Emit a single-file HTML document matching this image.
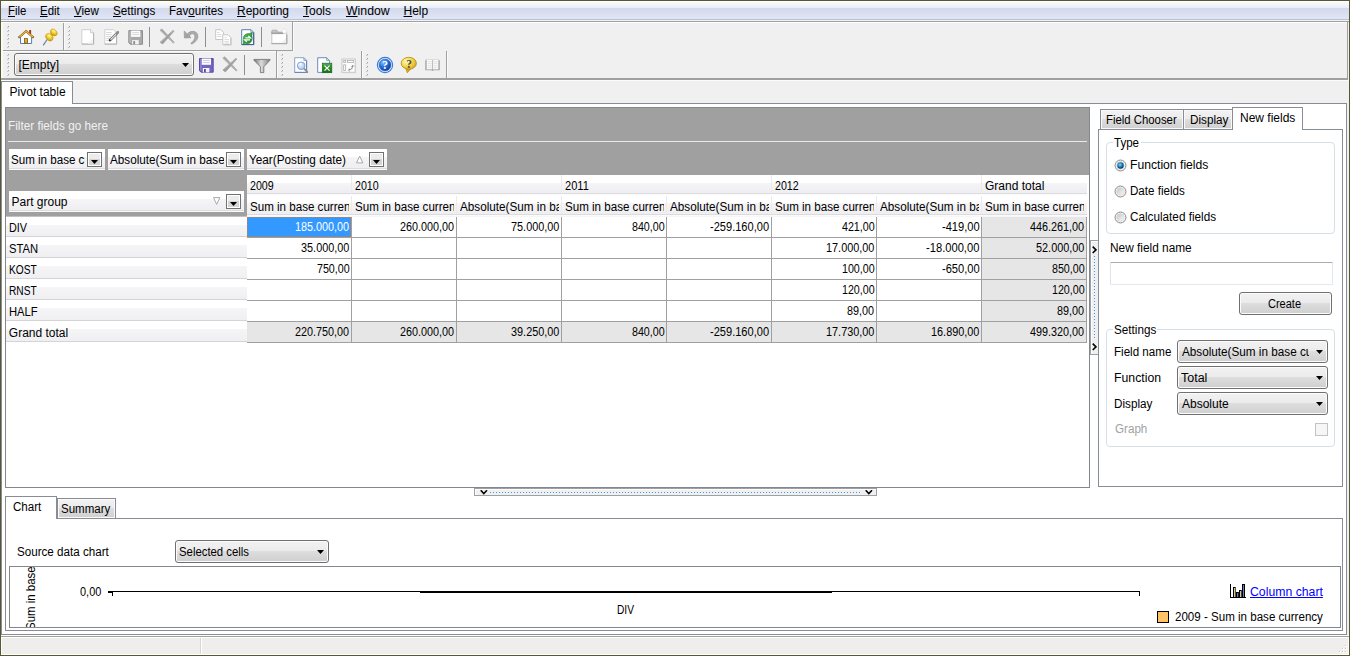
<!DOCTYPE html>
<html><head><meta charset="utf-8"><title>Pivot table</title>
<style>
html,body{margin:0;padding:0;background:#fff}
#r{position:relative;width:1350px;height:656px;overflow:hidden;background:#f0f0f0;font:12px/14px "Liberation Sans",sans-serif;color:#000}
#r div,#r svg{position:absolute;box-sizing:border-box}
#r .t{white-space:nowrap;height:14px}
#r .t span{display:inline-block}
#r u{text-decoration:underline;text-underline-offset:1px}
</style></head>
<body><div id="r">
<div style="left:0px;top:0px;width:1350px;height:1px;background:#5c5733;"></div>
<div style="left:0px;top:0px;width:1px;height:656px;background:#5c5733;"></div>
<div style="left:1349px;top:0px;width:1px;height:656px;background:#5c5733;"></div>
<div style="left:0px;top:655px;width:1350px;height:1px;background:#5c5733;"></div>
<div style="left:1px;top:1px;width:1348px;height:20px;background:linear-gradient(to bottom,#fff 0,#fff 1px,#fafbfd 1px,#e9edf6 7px,#d3d9ec 7px,#e1e6f5 18px,#b8bfd6 18px,#b8bfd6 19px,#f4f4f4 19px);"></div>
<div class="t" style="left:8px;top:3.8px;"><span style="transform-origin:0 0;transform:scaleX(0.9474)"><u>F</u>ile</span></div>
<div class="t" style="left:40px;top:3.8px;"><span style="transform-origin:0 0;transform:scaleX(0.9524)"><u>E</u>dit</span></div>
<div class="t" style="left:74px;top:3.8px;"><span style="transform-origin:0 0;transform:scaleX(0.9615)"><u>V</u>iew</span></div>
<div class="t" style="left:113px;top:3.8px;"><span style="transform-origin:0 0;transform:scaleX(0.9767)"><u>S</u>ettings</span></div>
<div class="t" style="left:169px;top:3.8px;"><span style="transform-origin:0 0;transform:scaleX(0.9643)">Fav<u>o</u>urites</span></div>
<div class="t" style="left:237px;top:3.8px;"><span style="transform-origin:0 0;transform:scaleX(1.0000)"><u>R</u>eporting</span></div>
<div class="t" style="left:303px;top:3.8px;"><span style="transform-origin:0 0;transform:scaleX(1.0000)"><u>T</u>ools</span></div>
<div class="t" style="left:345.5px;top:3.8px;"><span style="transform-origin:0 0;transform:scaleX(1.0233)"><u>W</u>indow</span></div>
<div class="t" style="left:403.5px;top:3.8px;"><span style="transform-origin:0 0;transform:scaleX(1.0000)"><u>H</u>elp</span></div>
<div style="left:1px;top:21px;width:1348px;height:1px;background:#a0a0a0;"></div>
<div style="left:1px;top:22px;width:1347px;height:1px;background:#fff;"></div>
<div style="left:1px;top:23px;width:2px;height:55px;background:#fafafa;"></div>
<div style="left:1347px;top:22px;width:1px;height:58px;background:#a0a0a0;"></div>
<div style="left:1px;top:78px;width:1347px;height:2px;background:#a0a0a0;"></div>
<div style="left:1px;top:80px;width:1348px;height:1px;background:#fbfbfb;"></div>
<div style="left:3px;top:50px;width:290px;height:1px;background:#a0a0a0;"></div>
<div style="left:63px;top:23px;width:1px;height:27px;background:#a0a0a0;"></div>
<div style="left:292px;top:22px;width:1px;height:29px;background:#a0a0a0;"></div>
<div style="left:64px;top:23px;width:1px;height:27px;background:#fbfbfb;"></div>
<div style="left:293px;top:23px;width:1px;height:28px;background:#fbfbfb;"></div>
<div style="left:3px;top:51px;width:274px;height:1px;background:#fbfbfb;"></div>
<div style="left:7px;top:27px;width:1px;height:1px;background:#c4c4c4;"></div>
<div style="left:8px;top:26px;width:1px;height:1px;background:#a2a2a2;"></div>
<div style="left:8px;top:27px;width:1px;height:1px;background:#d8d8d8;"></div>
<div style="left:7px;top:31px;width:1px;height:1px;background:#c4c4c4;"></div>
<div style="left:8px;top:30px;width:1px;height:1px;background:#a2a2a2;"></div>
<div style="left:8px;top:31px;width:1px;height:1px;background:#d8d8d8;"></div>
<div style="left:7px;top:35px;width:1px;height:1px;background:#c4c4c4;"></div>
<div style="left:8px;top:34px;width:1px;height:1px;background:#a2a2a2;"></div>
<div style="left:8px;top:35px;width:1px;height:1px;background:#d8d8d8;"></div>
<div style="left:7px;top:39px;width:1px;height:1px;background:#c4c4c4;"></div>
<div style="left:8px;top:38px;width:1px;height:1px;background:#a2a2a2;"></div>
<div style="left:8px;top:39px;width:1px;height:1px;background:#d8d8d8;"></div>
<div style="left:7px;top:43px;width:1px;height:1px;background:#c4c4c4;"></div>
<div style="left:8px;top:42px;width:1px;height:1px;background:#a2a2a2;"></div>
<div style="left:8px;top:43px;width:1px;height:1px;background:#d8d8d8;"></div>
<div style="left:7px;top:47px;width:1px;height:1px;background:#c4c4c4;"></div>
<div style="left:8px;top:46px;width:1px;height:1px;background:#a2a2a2;"></div>
<div style="left:8px;top:47px;width:1px;height:1px;background:#d8d8d8;"></div>
<div style="left:68px;top:27px;width:1px;height:1px;background:#c4c4c4;"></div>
<div style="left:69px;top:26px;width:1px;height:1px;background:#a2a2a2;"></div>
<div style="left:69px;top:27px;width:1px;height:1px;background:#d8d8d8;"></div>
<div style="left:68px;top:31px;width:1px;height:1px;background:#c4c4c4;"></div>
<div style="left:69px;top:30px;width:1px;height:1px;background:#a2a2a2;"></div>
<div style="left:69px;top:31px;width:1px;height:1px;background:#d8d8d8;"></div>
<div style="left:68px;top:35px;width:1px;height:1px;background:#c4c4c4;"></div>
<div style="left:69px;top:34px;width:1px;height:1px;background:#a2a2a2;"></div>
<div style="left:69px;top:35px;width:1px;height:1px;background:#d8d8d8;"></div>
<div style="left:68px;top:39px;width:1px;height:1px;background:#c4c4c4;"></div>
<div style="left:69px;top:38px;width:1px;height:1px;background:#a2a2a2;"></div>
<div style="left:69px;top:39px;width:1px;height:1px;background:#d8d8d8;"></div>
<div style="left:68px;top:43px;width:1px;height:1px;background:#c4c4c4;"></div>
<div style="left:69px;top:42px;width:1px;height:1px;background:#a2a2a2;"></div>
<div style="left:69px;top:43px;width:1px;height:1px;background:#d8d8d8;"></div>
<div style="left:68px;top:47px;width:1px;height:1px;background:#c4c4c4;"></div>
<div style="left:69px;top:46px;width:1px;height:1px;background:#a2a2a2;"></div>
<div style="left:69px;top:47px;width:1px;height:1px;background:#d8d8d8;"></div>
<div style="left:149px;top:27px;width:1px;height:20px;background:#8e8e8e;"></div>
<div style="left:205px;top:27px;width:1px;height:20px;background:#8e8e8e;"></div>
<div style="left:261px;top:27px;width:1px;height:20px;background:#8e8e8e;"></div>
<div style="left:276px;top:51px;width:1px;height:27px;background:#a0a0a0;"></div>
<div style="left:277px;top:52px;width:1px;height:26px;background:#fbfbfb;"></div>
<div style="left:361px;top:51px;width:1px;height:27px;background:#a0a0a0;"></div>
<div style="left:362px;top:52px;width:1px;height:26px;background:#fbfbfb;"></div>
<div style="left:446px;top:51px;width:1px;height:27px;background:#a0a0a0;"></div>
<div style="left:447px;top:52px;width:1px;height:26px;background:#fbfbfb;"></div>
<div style="left:7px;top:55px;width:1px;height:1px;background:#c4c4c4;"></div>
<div style="left:8px;top:54px;width:1px;height:1px;background:#a2a2a2;"></div>
<div style="left:8px;top:55px;width:1px;height:1px;background:#d8d8d8;"></div>
<div style="left:7px;top:59px;width:1px;height:1px;background:#c4c4c4;"></div>
<div style="left:8px;top:58px;width:1px;height:1px;background:#a2a2a2;"></div>
<div style="left:8px;top:59px;width:1px;height:1px;background:#d8d8d8;"></div>
<div style="left:7px;top:63px;width:1px;height:1px;background:#c4c4c4;"></div>
<div style="left:8px;top:62px;width:1px;height:1px;background:#a2a2a2;"></div>
<div style="left:8px;top:63px;width:1px;height:1px;background:#d8d8d8;"></div>
<div style="left:7px;top:67px;width:1px;height:1px;background:#c4c4c4;"></div>
<div style="left:8px;top:66px;width:1px;height:1px;background:#a2a2a2;"></div>
<div style="left:8px;top:67px;width:1px;height:1px;background:#d8d8d8;"></div>
<div style="left:7px;top:71px;width:1px;height:1px;background:#c4c4c4;"></div>
<div style="left:8px;top:70px;width:1px;height:1px;background:#a2a2a2;"></div>
<div style="left:8px;top:71px;width:1px;height:1px;background:#d8d8d8;"></div>
<div style="left:7px;top:75px;width:1px;height:1px;background:#c4c4c4;"></div>
<div style="left:8px;top:74px;width:1px;height:1px;background:#a2a2a2;"></div>
<div style="left:8px;top:75px;width:1px;height:1px;background:#d8d8d8;"></div>
<div style="left:281px;top:55px;width:1px;height:1px;background:#c4c4c4;"></div>
<div style="left:282px;top:54px;width:1px;height:1px;background:#a2a2a2;"></div>
<div style="left:282px;top:55px;width:1px;height:1px;background:#d8d8d8;"></div>
<div style="left:281px;top:59px;width:1px;height:1px;background:#c4c4c4;"></div>
<div style="left:282px;top:58px;width:1px;height:1px;background:#a2a2a2;"></div>
<div style="left:282px;top:59px;width:1px;height:1px;background:#d8d8d8;"></div>
<div style="left:281px;top:63px;width:1px;height:1px;background:#c4c4c4;"></div>
<div style="left:282px;top:62px;width:1px;height:1px;background:#a2a2a2;"></div>
<div style="left:282px;top:63px;width:1px;height:1px;background:#d8d8d8;"></div>
<div style="left:281px;top:67px;width:1px;height:1px;background:#c4c4c4;"></div>
<div style="left:282px;top:66px;width:1px;height:1px;background:#a2a2a2;"></div>
<div style="left:282px;top:67px;width:1px;height:1px;background:#d8d8d8;"></div>
<div style="left:281px;top:71px;width:1px;height:1px;background:#c4c4c4;"></div>
<div style="left:282px;top:70px;width:1px;height:1px;background:#a2a2a2;"></div>
<div style="left:282px;top:71px;width:1px;height:1px;background:#d8d8d8;"></div>
<div style="left:281px;top:75px;width:1px;height:1px;background:#c4c4c4;"></div>
<div style="left:282px;top:74px;width:1px;height:1px;background:#a2a2a2;"></div>
<div style="left:282px;top:75px;width:1px;height:1px;background:#d8d8d8;"></div>
<div style="left:366px;top:55px;width:1px;height:1px;background:#c4c4c4;"></div>
<div style="left:367px;top:54px;width:1px;height:1px;background:#a2a2a2;"></div>
<div style="left:367px;top:55px;width:1px;height:1px;background:#d8d8d8;"></div>
<div style="left:366px;top:59px;width:1px;height:1px;background:#c4c4c4;"></div>
<div style="left:367px;top:58px;width:1px;height:1px;background:#a2a2a2;"></div>
<div style="left:367px;top:59px;width:1px;height:1px;background:#d8d8d8;"></div>
<div style="left:366px;top:63px;width:1px;height:1px;background:#c4c4c4;"></div>
<div style="left:367px;top:62px;width:1px;height:1px;background:#a2a2a2;"></div>
<div style="left:367px;top:63px;width:1px;height:1px;background:#d8d8d8;"></div>
<div style="left:366px;top:67px;width:1px;height:1px;background:#c4c4c4;"></div>
<div style="left:367px;top:66px;width:1px;height:1px;background:#a2a2a2;"></div>
<div style="left:367px;top:67px;width:1px;height:1px;background:#d8d8d8;"></div>
<div style="left:366px;top:71px;width:1px;height:1px;background:#c4c4c4;"></div>
<div style="left:367px;top:70px;width:1px;height:1px;background:#a2a2a2;"></div>
<div style="left:367px;top:71px;width:1px;height:1px;background:#d8d8d8;"></div>
<div style="left:366px;top:75px;width:1px;height:1px;background:#c4c4c4;"></div>
<div style="left:367px;top:74px;width:1px;height:1px;background:#a2a2a2;"></div>
<div style="left:367px;top:75px;width:1px;height:1px;background:#d8d8d8;"></div>
<div style="left:244px;top:55px;width:1px;height:20px;background:#8e8e8e;"></div>
<div style="left:14px;top:53px;width:180px;height:23px;background:linear-gradient(#f2f2f2 0,#ebebeb 48%,#dddddd 50%,#cfcfcf 100%);border:1px solid #707070;border-radius:3px;box-shadow:inset 0 0 0 1px #fcfcfc;"></div>
<svg style="left:182px;top:63px" width="7" height="4"><path d="M0 0h7L3.5 4z" fill="#000"/></svg>
<div class="t" style="left:18.5px;top:58.1px;"><span style="transform-origin:0 0;transform:scaleX(1.0000)">[Empty]</span></div>
<svg style="left:0;top:22px" width="450" height="58" viewBox="0 22 450 58"><defs><radialGradient id="gp" cx="0.38" cy="0.32" r="0.75"><stop offset="0" stop-color="#fff7a8"/><stop offset="0.45" stop-color="#f3d132"/><stop offset="1" stop-color="#c4930e"/></radialGradient><radialGradient id="gb" cx="0.36" cy="0.3" r="0.8"><stop offset="0" stop-color="#8cc4ff"/><stop offset="0.45" stop-color="#2a6fd8"/><stop offset="1" stop-color="#08348f"/></radialGradient><radialGradient id="gy" cx="0.35" cy="0.35" r="0.8"><stop offset="0" stop-color="#fffcc0"/><stop offset="0.5" stop-color="#f3d64a"/><stop offset="1" stop-color="#cf9716"/></radialGradient><radialGradient id="gm" cx="0.4" cy="0.35" r="0.8"><stop offset="0" stop-color="#f2f7ff"/><stop offset="1" stop-color="#8fb6ea"/></radialGradient><linearGradient id="gf" x1="0" x2="1" y1="0" y2="0"><stop offset="0" stop-color="#6f6f6f"/><stop offset="0.45" stop-color="#dcdcdc"/><stop offset="1" stop-color="#808080"/></linearGradient><linearGradient id="gx" x1="0" x2="0" y1="0" y2="1"><stop offset="0" stop-color="#62b062"/><stop offset="0.35" stop-color="#2f8f2f"/><stop offset="1" stop-color="#167016"/></linearGradient><linearGradient id="gg" x1="0" x2="1" y1="0" y2="1"><stop offset="0" stop-color="#58c058"/><stop offset="1" stop-color="#1c8424"/></linearGradient></defs><rect x="29.2" y="30" width="1.9" height="4.3" fill="#a8301c"/><path d="M20.5 43.5V36.6L26.1 31.6L31.6 36.6V43.5Z" fill="#fcfdff" stroke="#5a7cae" stroke-width="1"/><path d="M18.5 37.7L26.1 31.2L33.7 37.7" fill="none" stroke="#7b5d33" stroke-width="2.1" stroke-linejoin="miter"/><path d="M19.4 37L26.1 31.3L32.8 37" fill="none" stroke="#f2b42a" stroke-width="1.25"/><rect x="24.4" y="38.6" width="3.1" height="4.6" fill="#f2aa08" stroke="#6b5a3a" stroke-width="0.8"/><path d="M47.2 39.5L43.5 44.8" stroke="#62759f" stroke-width="1.15" stroke-linecap="round"/><path d="M46.6 39.3L43.6 43.4" stroke="#c2cce6" stroke-width="0.7"/><path d="M49.2 37.3L53.6 32.6" stroke="#dcb01c" stroke-width="3.4"/><ellipse cx="49.3" cy="37.2" rx="4.2" ry="3.2" transform="rotate(45 49.3 37.2)" fill="url(#gp)" stroke="#c39410" stroke-width="0.5"/><ellipse cx="53.8" cy="32.4" rx="3.9" ry="2.8" transform="rotate(45 53.8 32.4)" fill="url(#gp)" stroke="#c39410" stroke-width="0.5"/><path d="M81.8 29.7H90.6L93.6 32.7V44.1H81.8Z" fill="#fff" stroke="#cfcfcf" stroke-width="1"/><path d="M93.6 32.7V44.1H81.8" fill="none" stroke="#b2b2b2" stroke-width="1"/><path d="M90.6 29.7V32.7H93.6" fill="#f2f2f2" stroke="#c4c4c4" stroke-width="0.8"/><path d="M88 43.5L93 38.5V43.5Z" fill="#f3f3f3"/><path d="M104.8 29.7H113.6L116.6 32.7V44.1H104.8Z" fill="#fff" stroke="#cfcfcf" stroke-width="1"/><path d="M116.6 32.7V44.1H104.8" fill="none" stroke="#b2b2b2" stroke-width="1"/><path d="M106.2 32.5H111.6M106.2 34.5H111.6M106.2 36.5H111M106.2 38.5H109.8M106.2 40.5H108.4" stroke="#d2d2d2" stroke-width="0.9"/><path d="M109.9 40.2L117.6 32.6" stroke="#6d6d6d" stroke-width="2.6" stroke-linecap="round"/><path d="M110.6 39.6L116.4 33.8" stroke="#ededed" stroke-width="1.05"/><path d="M116.6 33.5L117.9 32.2" stroke="#8c8c8c" stroke-width="2.4" stroke-linecap="round"/><path d="M108.9 41.2L110.9 40.7L109.4 39.2Z" fill="#2c2c2c"/><g transform="translate(128.3 30.1)"><path d="M0.5 0.5H14.2V14.2H2L0.5 12.7Z" fill="#a9a9a9" stroke="#8f8f8f" stroke-width="1"/><rect x="1.2" y="1" width="1.3" height="11.5" fill="#b9b9b9"/><rect x="2.8" y="0.5" width="9.2" height="6.3" fill="#fdfdfd"/><path d="M4 2.5H10.8M4 4.5H10.8" stroke="#d2d2d2" stroke-width="0.9"/><rect x="3.8" y="10" width="6.6" height="4.3" fill="#f3f3f6"/><rect x="5" y="11" width="1.8" height="3.3" fill="#8a8a8a"/><rect x="12.6" y="1.3" width="0.9" height="1.1" fill="#8f8f8f"/></g><g transform="translate(0 0)" stroke-linecap="round"><path d="M160.3 30.1L161.9 28.9L174.2 42.3L173.7 42.9Z" fill="#a2a2a2" stroke="#a8a8a8" stroke-width="0.8"/><path d="M173.3 30.6L174 31.2L162.6 44.0L160.4 42.4Z" fill="#9c9c9c" stroke="#a8a8a8" stroke-width="0.9"/></g><path d="M184.2 30.9L184.4 38L191 37.8Z" fill="#a6a6a6" stroke="#8f8f8f" stroke-width="0.6"/><path d="M186.6 35.6C188 30.2 197.6 29.4 197.9 36.2C198 39.6 195 42.4 191.6 44.2L190.9 43.1C193.4 41.4 195 39 194.8 36.4C194.5 32.8 190.6 32.6 189.4 36.6Z" fill="#ababab" stroke="#8f8f8f" stroke-width="0.6"/><path d="M215.7 29.7H220.9L223.5 32.3V39.5H215.7Z" fill="#fff" stroke="#c6c6c6" stroke-width="1"/><path d="M217.2 32.5H219.6M217.2 34.5H221.6M217.2 36.5H221.6" stroke="#d6d6d6" stroke-width="0.9"/><path d="M231.1 38V44.9H223.6" fill="none" stroke="#bcbcbc" stroke-width="0.9"/><path d="M222.8 34.8H228L230.6 37.4V44.5H222.8Z" fill="#fff" stroke="#c6c6c6" stroke-width="1"/><path d="M224.4 37.6H226.6M224.4 39.6H229M224.4 41.6H229M224.4 43.2H229" stroke="#d6d6d6" stroke-width="0.9"/><path d="M241.7 29.7H250.9L253.7 32.5V44.6H241.7Z" fill="#fff" stroke="#5d7fb0" stroke-width="1"/><path d="M253.7 32.6V44.6H241.7" fill="none" stroke="#3f5c92" stroke-width="1"/><path d="M250.9 29.7V32.5H253.7Z" fill="#dbe6f5" stroke="#5d7fb0" stroke-width="0.7"/><path d="M243.3 44.2V38.6C243.3 35.2 246 33.3 249.2 33.5L252.3 32.8L251.9 36C253.1 39.2 251.4 43.7 247.4 43.7C246 43.7 245 43.3 244.5 42.7L244.4 44.2Z" fill="url(#gg)" stroke="#1f7a25" stroke-width="0.5"/><path d="M245.4 37.9H250.4L248.4 36M250 39.9H244.8L246.8 41.8" fill="none" stroke="#fff" stroke-width="1.3"/><rect x="271.8" y="33" width="14.9" height="10.4" fill="#fdfdfd" stroke="#c8c8c8" stroke-width="1"/><path d="M271.4 43.6H287M286.8 43.8V34.4" fill="none" stroke="#ababab" stroke-width="1.2"/><path d="M271.8 33.6V31Q271.8 30.2 272.6 30.2H276.8L277.8 32.2H283.4V33.6Z" fill="#c4c4c4" stroke="#a6a6a6" stroke-width="0.8"/><path d="M271.4 33.2H283.6" stroke="#9c9c9c" stroke-width="1.2"/><path d="M281 42.8L286 37.8V42.8Z" fill="#f1f1f1"/><path d="M284.4 28.6L287.2 31.3L284.4 34L281.7 31.3Z" fill="#fbfbfb" stroke="#cfcfcf" stroke-width="0.9" stroke-dasharray="1.2 0.9"/><g transform="translate(199 58)"><path d="M0.5 0.5H14.2V14.2H2L0.5 12.7Z" fill="#7264bf" stroke="#5a4cab" stroke-width="1"/><rect x="1.2" y="1" width="1.3" height="11.5" fill="#9489d6"/><rect x="2.8" y="0.5" width="9.2" height="6.3" fill="#fdfdfd"/><path d="M4 2.5H10.8M4 4.5H10.8" stroke="#cbc4ea" stroke-width="0.9"/><rect x="3.8" y="10" width="6.6" height="4.3" fill="#f3f3f6"/><rect x="5" y="11" width="1.8" height="3.3" fill="#5546a6"/><rect x="12.6" y="1.3" width="0.9" height="1.1" fill="#5a4cab"/></g><g transform="translate(62.8 27.9)" stroke-linecap="round"><path d="M160.3 30.1L161.9 28.9L174.2 42.3L173.7 42.9Z" fill="#a2a2a2" stroke="#a8a8a8" stroke-width="0.8"/><path d="M173.3 30.6L174 31.2L162.6 44.0L160.4 42.4Z" fill="#9c9c9c" stroke="#a8a8a8" stroke-width="0.9"/></g><path d="M253.9 59.4H270V60.2L263.8 66.8V72.6H260.4V66.8L253.9 60.2Z" fill="url(#gf)" stroke="#6c6c6c" stroke-width="0.8"/><path d="M254.3 59.6H269.6" stroke="#8a8a8a" stroke-width="0.9"/><path d="M294.7 57.7H303.8L306.6 60.5V72.4H294.7Z" fill="#fff" stroke="#8aa3cb" stroke-width="1"/><path d="M306.6 60.6V72.4H294.7" fill="none" stroke="#6483b8" stroke-width="1"/><path d="M303.8 57.7V60.5H306.6Z" fill="#dbe6f5" stroke="#6a8cc0" stroke-width="0.7"/><path d="M303.8 68.4L307.4 72.2" stroke="#8a8a8a" stroke-width="1.7" stroke-linecap="round"/><circle cx="301.2" cy="65.8" r="3.8" fill="url(#gm)" stroke="#7fa3d6" stroke-width="1"/><path d="M298.8 65.2A2.6 2.6 0 0 1 301 63.2" fill="none" stroke="#fff" stroke-width="0.9"/><path d="M317.7 57.7H326.6L329.6 60.7V72.4H317.7Z" fill="#fff" stroke="#6a8cc0" stroke-width="1"/><path d="M326.6 57.7V60.6H329.6Z" fill="#dbe6f5" stroke="#6a8cc0" stroke-width="0.7"/><rect x="322.3" y="63.2" width="9.5" height="9.5" fill="url(#gx)" stroke="#176a17" stroke-width="0.7"/><path d="M324.5 65.6L329.6 70.6M329.6 65.6L324.5 70.6" stroke="#fff" stroke-width="1.25"/><rect x="342" y="59" width="13.2" height="13.3" fill="#fcfcfc" stroke="#c6c6c6" stroke-width="1"/><path d="M355.6 60V72.7H343" fill="none" stroke="#cfcfcf" stroke-width="0.7"/><rect x="343.7" y="60.6" width="2" height="1.9" fill="none" stroke="#a9a9a9" stroke-width="0.75"/><rect x="347.5" y="60.6" width="6" height="1.9" fill="none" stroke="#a9a9a9" stroke-width="0.75"/><rect x="343.7" y="64.9" width="2" height="5.6" fill="none" stroke="#a9a9a9" stroke-width="0.75"/><path d="M348.8 70Q352.8 69.6 352.8 65.8" fill="none" stroke="#8a8a8a" stroke-width="1"/><path d="M351.4 66.6L352.8 65.2L354.2 66.6M349.8 68.8L348.4 70L349.8 71.3" fill="none" stroke="#8a8a8a" stroke-width="0.9"/><circle cx="385" cy="65" r="7.6" fill="#fff" stroke="#3b7cdc" stroke-width="1.2"/><circle cx="385" cy="65" r="6" fill="url(#gb)" stroke="#2a62c4" stroke-width="0.6"/><text x="385" y="69" text-anchor="middle" font-family="Liberation Serif,serif" font-weight="bold" font-size="11.5" fill="#fff">?</text><path d="M405.6 67.6L407.2 72.9L411.6 68.2Z" fill="#d9a820" stroke="#b8881a" stroke-width="0.6"/><ellipse cx="408.8" cy="63.3" rx="7.6" ry="6" fill="url(#gy)" stroke="#b8881a" stroke-width="0.8"/><text x="409.2" y="67.6" text-anchor="middle" font-family="Liberation Serif,serif" font-weight="bold" font-size="11.5" fill="#4a4a4a">?</text><path d="M425.3 60.3H439.7V70.3H433.7L432.5 71.1L431.3 70.3H425.3Z" fill="#9e9e9e"/><rect x="426.7" y="59.7" width="5.4" height="9.6" fill="#fbfbfb" stroke="#c8c8c8" stroke-width="0.5"/><rect x="432.9" y="59.7" width="5.4" height="9.6" fill="#fbfbfb" stroke="#c8c8c8" stroke-width="0.5"/><path d="M427.6 61.6H431.2M427.6 63.6H431.2M427.6 65.6H431.2M427.6 67.6H431.2M433.8 61.6H437.4M433.8 63.6H437.4M433.8 65.6H437.4M433.8 67.6H437.4" stroke="#dadada" stroke-width="0.8"/></svg>
<div style="left:1px;top:103px;width:1346px;height:532px;background:#fff;border:1px solid #898c95;"></div>
<div style="left:1px;top:81px;width:72px;height:23px;background:#fff;border:1px solid #898c95;border-bottom:none;"></div>
<div class="t" style="left:9.6px;top:84.6px;"><span style="transform-origin:0 0;transform:scaleX(1.0000)">Pivot table</span></div>
<div style="left:5px;top:107px;width:1085px;height:381px;background:#fff;border:1px solid #828790;"></div>
<div style="left:6px;top:108px;width:1083px;height:108px;background:#a0a0a0;"></div>
<div style="left:1087px;top:175px;width:2px;height:41px;background:#fff;"></div>
<div style="left:8px;top:141px;width:1079px;height:1px;background:#e9e9e9;"></div>
<div class="t" style="left:8px;top:118.8px;color:#f1f1f1;"><span style="transform-origin:0 0;transform:scaleX(0.9804)">Filter fields go here</span></div>
<div style="left:9px;top:149px;width:96px;height:21px;background:linear-gradient(#fff 0,#fff 38%,#f5f5f7 40%,#ededf0 100%);"></div>
<div style="left:9px;top:168px;width:96px;height:1px;background:#dcdce0;"></div>
<div style="left:9px;top:169px;width:96px;height:1px;background:#fafafa;"></div>
<div class="t" style="left:11px;top:152.8px;width:74px;overflow:hidden;"><span style="transform-origin:0 0;transform:scaleX(0.9655)">Sum in base currency</span></div>
<div style="left:87px;top:152px;width:15px;height:15px;background:#fff;border:1px solid #707070;"></div>
<div style="left:89px;top:154px;width:11px;height:5px;background:#ececec;"></div>
<div style="left:89px;top:159px;width:11px;height:6px;background:#d4d4d4;"></div>
<svg style="left:91px;top:160px" width="7" height="4"><path d="M0 0h7L3.5 4z" fill="#000"/></svg>
<div style="left:108px;top:149px;width:136px;height:21px;background:linear-gradient(#fff 0,#fff 38%,#f5f5f7 40%,#ededf0 100%);"></div>
<div style="left:108px;top:168px;width:136px;height:1px;background:#dcdce0;"></div>
<div style="left:108px;top:169px;width:136px;height:1px;background:#fafafa;"></div>
<div class="t" style="left:110px;top:152.8px;width:114px;overflow:hidden;"><span style="transform-origin:0 0;transform:scaleX(0.9766)">Absolute(Sum in base currency)</span></div>
<div style="left:226px;top:152px;width:15px;height:15px;background:#fff;border:1px solid #707070;"></div>
<div style="left:228px;top:154px;width:11px;height:5px;background:#ececec;"></div>
<div style="left:228px;top:159px;width:11px;height:6px;background:#d4d4d4;"></div>
<svg style="left:230px;top:160px" width="7" height="4"><path d="M0 0h7L3.5 4z" fill="#000"/></svg>
<div style="left:247px;top:149px;width:140px;height:21px;background:linear-gradient(#fff 0,#fff 38%,#f5f5f7 40%,#ededf0 100%);"></div>
<div style="left:247px;top:168px;width:140px;height:1px;background:#dcdce0;"></div>
<div style="left:247px;top:169px;width:140px;height:1px;background:#fafafa;"></div>
<div class="t" style="left:249px;top:152.8px;"><span style="transform-origin:0 0;transform:scaleX(0.9798)">Year(Posting date)</span></div>
<div style="left:369px;top:152px;width:15px;height:15px;background:#fff;border:1px solid #707070;"></div>
<div style="left:371px;top:154px;width:11px;height:5px;background:#ececec;"></div>
<div style="left:371px;top:159px;width:11px;height:6px;background:#d4d4d4;"></div>
<svg style="left:373px;top:160px" width="7" height="4"><path d="M0 0h7L3.5 4z" fill="#000"/></svg>
<svg style="left:356px;top:155px" width="8" height="9"><path d="M0.5 7.9h6.4L3.7 1.1z" fill="#fff" stroke="#a8a8a8" stroke-width="1"/></svg>
<div style="left:9px;top:191px;width:235px;height:21px;background:linear-gradient(#fff 0,#fff 38%,#f5f5f7 40%,#ededf0 100%);"></div>
<div style="left:9px;top:210px;width:235px;height:1px;background:#dcdce0;"></div>
<div style="left:9px;top:211px;width:235px;height:1px;background:#fafafa;"></div>
<div class="t" style="left:11.5px;top:194.8px;"><span style="transform-origin:0 0;transform:scaleX(1.0000)">Part group</span></div>
<div style="left:226px;top:194px;width:15px;height:15px;background:#fff;border:1px solid #707070;"></div>
<div style="left:228px;top:196px;width:11px;height:5px;background:#ececec;"></div>
<div style="left:228px;top:201px;width:11px;height:6px;background:#d4d4d4;"></div>
<svg style="left:230px;top:202px" width="7" height="4"><path d="M0 0h7L3.5 4z" fill="#000"/></svg>
<svg style="left:213px;top:197px" width="8" height="9"><path d="M0.5 0.6h6.4L3.7 7.4z" fill="#fff" stroke="#a8a8a8" stroke-width="1"/></svg>
<div style="left:247px;top:175px;width:105px;height:20px;background:linear-gradient(#fff 0,#fff 38%,#f5f5f7 40%,#ededf0 100%);"></div>
<div style="left:247px;top:193px;width:105px;height:1px;background:#dcdce0;"></div>
<div style="left:247px;top:194px;width:105px;height:1px;background:#fafafa;"></div>
<div class="t" style="left:250px;top:178.8px;"><span style="transform-origin:0 0;transform:scaleX(0.8889)">2009</span></div>
<div style="left:352px;top:175px;width:210px;height:20px;background:linear-gradient(#fff 0,#fff 38%,#f5f5f7 40%,#ededf0 100%);"></div>
<div style="left:352px;top:193px;width:210px;height:1px;background:#dcdce0;"></div>
<div style="left:352px;top:194px;width:210px;height:1px;background:#fafafa;"></div>
<div style="left:351px;top:175px;width:1px;height:19px;background:#ebebee;"></div>
<div class="t" style="left:355px;top:178.8px;"><span style="transform-origin:0 0;transform:scaleX(0.8889)">2010</span></div>
<div style="left:562px;top:175px;width:210px;height:20px;background:linear-gradient(#fff 0,#fff 38%,#f5f5f7 40%,#ededf0 100%);"></div>
<div style="left:562px;top:193px;width:210px;height:1px;background:#dcdce0;"></div>
<div style="left:562px;top:194px;width:210px;height:1px;background:#fafafa;"></div>
<div style="left:561px;top:175px;width:1px;height:19px;background:#ebebee;"></div>
<div class="t" style="left:565px;top:178.8px;"><span style="transform-origin:0 0;transform:scaleX(0.9231)">2011</span></div>
<div style="left:772px;top:175px;width:210px;height:20px;background:linear-gradient(#fff 0,#fff 38%,#f5f5f7 40%,#ededf0 100%);"></div>
<div style="left:772px;top:193px;width:210px;height:1px;background:#dcdce0;"></div>
<div style="left:772px;top:194px;width:210px;height:1px;background:#fafafa;"></div>
<div style="left:771px;top:175px;width:1px;height:19px;background:#ebebee;"></div>
<div class="t" style="left:775px;top:178.8px;"><span style="transform-origin:0 0;transform:scaleX(0.8889)">2012</span></div>
<div style="left:982px;top:175px;width:105px;height:20px;background:linear-gradient(#fff 0,#fff 38%,#f5f5f7 40%,#ededf0 100%);"></div>
<div style="left:982px;top:193px;width:105px;height:1px;background:#dcdce0;"></div>
<div style="left:982px;top:194px;width:105px;height:1px;background:#fafafa;"></div>
<div style="left:981px;top:175px;width:1px;height:19px;background:#ebebee;"></div>
<div class="t" style="left:985px;top:178.8px;"><span style="transform-origin:0 0;transform:scaleX(1.0000)">Grand total</span></div>
<div style="left:247px;top:195px;width:105px;height:21px;background:linear-gradient(#fff 0,#fff 38%,#f5f5f7 40%,#ededf0 100%);"></div>
<div style="left:247px;top:214px;width:105px;height:1px;background:#dcdce0;"></div>
<div style="left:247px;top:215px;width:105px;height:1px;background:#fafafa;"></div>
<div class="t" style="left:250px;top:200px;width:99px;overflow:hidden;"><span style="transform-origin:0 0;transform:scaleX(0.9655)">Sum in base currency</span></div>
<div style="left:352px;top:195px;width:105px;height:21px;background:linear-gradient(#fff 0,#fff 38%,#f5f5f7 40%,#ededf0 100%);"></div>
<div style="left:352px;top:214px;width:105px;height:1px;background:#dcdce0;"></div>
<div style="left:352px;top:215px;width:105px;height:1px;background:#fafafa;"></div>
<div style="left:351px;top:196px;width:1px;height:18px;background:#ebebee;"></div>
<div class="t" style="left:355px;top:200px;width:99px;overflow:hidden;"><span style="transform-origin:0 0;transform:scaleX(0.9655)">Sum in base currency</span></div>
<div style="left:457px;top:195px;width:105px;height:21px;background:linear-gradient(#fff 0,#fff 38%,#f5f5f7 40%,#ededf0 100%);"></div>
<div style="left:457px;top:214px;width:105px;height:1px;background:#dcdce0;"></div>
<div style="left:457px;top:215px;width:105px;height:1px;background:#fafafa;"></div>
<div style="left:456px;top:196px;width:1px;height:18px;background:#ebebee;"></div>
<div class="t" style="left:460px;top:200px;width:99px;overflow:hidden;"><span style="transform-origin:0 0;transform:scaleX(0.9766)">Absolute(Sum in base currency)</span></div>
<div style="left:562px;top:195px;width:105px;height:21px;background:linear-gradient(#fff 0,#fff 38%,#f5f5f7 40%,#ededf0 100%);"></div>
<div style="left:562px;top:214px;width:105px;height:1px;background:#dcdce0;"></div>
<div style="left:562px;top:215px;width:105px;height:1px;background:#fafafa;"></div>
<div style="left:561px;top:196px;width:1px;height:18px;background:#ebebee;"></div>
<div class="t" style="left:565px;top:200px;width:99px;overflow:hidden;"><span style="transform-origin:0 0;transform:scaleX(0.9655)">Sum in base currency</span></div>
<div style="left:667px;top:195px;width:105px;height:21px;background:linear-gradient(#fff 0,#fff 38%,#f5f5f7 40%,#ededf0 100%);"></div>
<div style="left:667px;top:214px;width:105px;height:1px;background:#dcdce0;"></div>
<div style="left:667px;top:215px;width:105px;height:1px;background:#fafafa;"></div>
<div style="left:666px;top:196px;width:1px;height:18px;background:#ebebee;"></div>
<div class="t" style="left:670px;top:200px;width:99px;overflow:hidden;"><span style="transform-origin:0 0;transform:scaleX(0.9766)">Absolute(Sum in base currency)</span></div>
<div style="left:772px;top:195px;width:105px;height:21px;background:linear-gradient(#fff 0,#fff 38%,#f5f5f7 40%,#ededf0 100%);"></div>
<div style="left:772px;top:214px;width:105px;height:1px;background:#dcdce0;"></div>
<div style="left:772px;top:215px;width:105px;height:1px;background:#fafafa;"></div>
<div style="left:771px;top:196px;width:1px;height:18px;background:#ebebee;"></div>
<div class="t" style="left:775px;top:200px;width:99px;overflow:hidden;"><span style="transform-origin:0 0;transform:scaleX(0.9655)">Sum in base currency</span></div>
<div style="left:877px;top:195px;width:105px;height:21px;background:linear-gradient(#fff 0,#fff 38%,#f5f5f7 40%,#ededf0 100%);"></div>
<div style="left:877px;top:214px;width:105px;height:1px;background:#dcdce0;"></div>
<div style="left:877px;top:215px;width:105px;height:1px;background:#fafafa;"></div>
<div style="left:876px;top:196px;width:1px;height:18px;background:#ebebee;"></div>
<div class="t" style="left:880px;top:200px;width:99px;overflow:hidden;"><span style="transform-origin:0 0;transform:scaleX(0.9766)">Absolute(Sum in base currency)</span></div>
<div style="left:982px;top:195px;width:105px;height:21px;background:linear-gradient(#fff 0,#fff 38%,#f5f5f7 40%,#ededf0 100%);"></div>
<div style="left:982px;top:214px;width:105px;height:1px;background:#dcdce0;"></div>
<div style="left:982px;top:215px;width:105px;height:1px;background:#fafafa;"></div>
<div style="left:981px;top:196px;width:1px;height:18px;background:#ebebee;"></div>
<div class="t" style="left:985px;top:200px;width:99px;overflow:hidden;"><span style="transform-origin:0 0;transform:scaleX(0.9655)">Sum in base currency</span></div>
<div style="left:247px;top:216px;width:840px;height:1px;background:#f6f6f6;"></div>
<div style="left:6px;top:216px;width:241px;height:1px;background:#c2c2c2;"></div>
<div style="left:6px;top:217px;width:241px;height:20px;background:linear-gradient(#fff 0,#fff 38%,#f5f5f7 40%,#efeff2 100%);"></div>
<div style="left:6px;top:236px;width:241px;height:1px;background:#d4d4d8;"></div>
<div class="t" style="left:8.8px;top:221px;"><span style="transform-origin:0 0;transform:scaleX(0.9000)">DIV</span></div>
<div style="left:6px;top:237px;width:241px;height:21px;background:linear-gradient(#fff 0,#fff 38%,#f5f5f7 40%,#efeff2 100%);"></div>
<div style="left:6px;top:257px;width:241px;height:1px;background:#d4d4d8;"></div>
<div class="t" style="left:8.8px;top:242px;"><span style="transform-origin:0 0;transform:scaleX(0.9355)">STAN</span></div>
<div style="left:6px;top:258px;width:241px;height:21px;background:linear-gradient(#fff 0,#fff 38%,#f5f5f7 40%,#efeff2 100%);"></div>
<div style="left:6px;top:278px;width:241px;height:1px;background:#d4d4d8;"></div>
<div class="t" style="left:8.8px;top:263px;"><span style="transform-origin:0 0;transform:scaleX(0.8485)">KOST</span></div>
<div style="left:6px;top:279px;width:241px;height:21px;background:linear-gradient(#fff 0,#fff 38%,#f5f5f7 40%,#efeff2 100%);"></div>
<div style="left:6px;top:299px;width:241px;height:1px;background:#d4d4d8;"></div>
<div class="t" style="left:8.8px;top:284px;"><span style="transform-origin:0 0;transform:scaleX(0.8485)">RNST</span></div>
<div style="left:6px;top:300px;width:241px;height:21px;background:linear-gradient(#fff 0,#fff 38%,#f5f5f7 40%,#efeff2 100%);"></div>
<div style="left:6px;top:320px;width:241px;height:1px;background:#d4d4d8;"></div>
<div class="t" style="left:8.8px;top:305px;"><span style="transform-origin:0 0;transform:scaleX(0.9355)">HALF</span></div>
<div style="left:6px;top:321px;width:241px;height:21px;background:linear-gradient(#fff 0,#fff 38%,#f5f5f7 40%,#efeff2 100%);"></div>
<div style="left:6px;top:341px;width:241px;height:1px;background:#d4d4d8;"></div>
<div class="t" style="left:8.8px;top:326px;"><span style="transform-origin:0 0;transform:scaleX(1.0000)">Grand total</span></div>
<div style="left:247px;top:322px;width:840px;height:20px;background:#e6e6e6;"></div>
<div style="left:982px;top:217px;width:105px;height:125px;background:#e6e6e6;"></div>
<div style="left:247px;top:237px;width:840px;height:1px;background:#a0a0a0;"></div>
<div style="left:247px;top:258px;width:840px;height:1px;background:#a0a0a0;"></div>
<div style="left:247px;top:279px;width:840px;height:1px;background:#a0a0a0;"></div>
<div style="left:247px;top:300px;width:840px;height:1px;background:#a0a0a0;"></div>
<div style="left:247px;top:321px;width:840px;height:1px;background:#a0a0a0;"></div>
<div style="left:247px;top:342px;width:840px;height:1px;background:#a0a0a0;"></div>
<div style="left:351px;top:217px;width:1px;height:126px;background:#a0a0a0;"></div>
<div style="left:456px;top:217px;width:1px;height:126px;background:#a0a0a0;"></div>
<div style="left:561px;top:217px;width:1px;height:126px;background:#a0a0a0;"></div>
<div style="left:666px;top:217px;width:1px;height:126px;background:#a0a0a0;"></div>
<div style="left:771px;top:217px;width:1px;height:126px;background:#a0a0a0;"></div>
<div style="left:876px;top:217px;width:1px;height:126px;background:#a0a0a0;"></div>
<div style="left:981px;top:217px;width:1px;height:126px;background:#a0a0a0;"></div>
<div style="left:1086px;top:217px;width:1px;height:126px;background:#a0a0a0;"></div>
<div style="left:247px;top:217px;width:104px;height:20px;background:#3399ff;outline:1px dotted #c87f3c;outline-offset:-1px;"></div>
<div class="t" style="left:49.5px;top:219.8px;width:300px;text-align:right;color:#fff;"><span style="transform-origin:100% 0;transform:scaleX(0.9000)">185.000,00</span></div>
<div class="t" style="left:154.5px;top:219.8px;width:300px;text-align:right;"><span style="transform-origin:100% 0;transform:scaleX(0.9000)">260.000,00</span></div>
<div class="t" style="left:259.5px;top:219.8px;width:300px;text-align:right;"><span style="transform-origin:100% 0;transform:scaleX(0.9057)">75.000,00</span></div>
<div class="t" style="left:364.5px;top:219.8px;width:300px;text-align:right;"><span style="transform-origin:100% 0;transform:scaleX(0.8919)">840,00</span></div>
<div class="t" style="left:469.5px;top:219.8px;width:300px;text-align:right;"><span style="transform-origin:100% 0;transform:scaleX(0.9219)">-259.160,00</span></div>
<div class="t" style="left:574.5px;top:219.8px;width:300px;text-align:right;"><span style="transform-origin:100% 0;transform:scaleX(0.8919)">421,00</span></div>
<div class="t" style="left:679.5px;top:219.8px;width:300px;text-align:right;"><span style="transform-origin:100% 0;transform:scaleX(0.9268)">-419,00</span></div>
<div class="t" style="left:784.5px;top:219.8px;width:300px;text-align:right;"><span style="transform-origin:100% 0;transform:scaleX(0.9000)">446.261,00</span></div>
<div class="t" style="left:49.5px;top:240.8px;width:300px;text-align:right;"><span style="transform-origin:100% 0;transform:scaleX(0.9057)">35.000,00</span></div>
<div class="t" style="left:574.5px;top:240.8px;width:300px;text-align:right;"><span style="transform-origin:100% 0;transform:scaleX(0.9057)">17.000,00</span></div>
<div class="t" style="left:679.5px;top:240.8px;width:300px;text-align:right;"><span style="transform-origin:100% 0;transform:scaleX(0.9298)">-18.000,00</span></div>
<div class="t" style="left:784.5px;top:240.8px;width:300px;text-align:right;"><span style="transform-origin:100% 0;transform:scaleX(0.9057)">52.000,00</span></div>
<div class="t" style="left:49.5px;top:261.8px;width:300px;text-align:right;"><span style="transform-origin:100% 0;transform:scaleX(0.8919)">750,00</span></div>
<div class="t" style="left:574.5px;top:261.8px;width:300px;text-align:right;"><span style="transform-origin:100% 0;transform:scaleX(0.8919)">100,00</span></div>
<div class="t" style="left:679.5px;top:261.8px;width:300px;text-align:right;"><span style="transform-origin:100% 0;transform:scaleX(0.9268)">-650,00</span></div>
<div class="t" style="left:784.5px;top:261.8px;width:300px;text-align:right;"><span style="transform-origin:100% 0;transform:scaleX(0.8919)">850,00</span></div>
<div class="t" style="left:574.5px;top:282.8px;width:300px;text-align:right;"><span style="transform-origin:100% 0;transform:scaleX(0.8919)">120,00</span></div>
<div class="t" style="left:784.5px;top:282.8px;width:300px;text-align:right;"><span style="transform-origin:100% 0;transform:scaleX(0.8919)">120,00</span></div>
<div class="t" style="left:574.5px;top:303.8px;width:300px;text-align:right;"><span style="transform-origin:100% 0;transform:scaleX(0.9000)">89,00</span></div>
<div class="t" style="left:784.5px;top:303.8px;width:300px;text-align:right;"><span style="transform-origin:100% 0;transform:scaleX(0.9000)">89,00</span></div>
<div class="t" style="left:49.5px;top:324.8px;width:300px;text-align:right;"><span style="transform-origin:100% 0;transform:scaleX(0.9000)">220.750,00</span></div>
<div class="t" style="left:154.5px;top:324.8px;width:300px;text-align:right;"><span style="transform-origin:100% 0;transform:scaleX(0.9000)">260.000,00</span></div>
<div class="t" style="left:259.5px;top:324.8px;width:300px;text-align:right;"><span style="transform-origin:100% 0;transform:scaleX(0.9057)">39.250,00</span></div>
<div class="t" style="left:364.5px;top:324.8px;width:300px;text-align:right;"><span style="transform-origin:100% 0;transform:scaleX(0.8919)">840,00</span></div>
<div class="t" style="left:469.5px;top:324.8px;width:300px;text-align:right;"><span style="transform-origin:100% 0;transform:scaleX(0.9219)">-259.160,00</span></div>
<div class="t" style="left:574.5px;top:324.8px;width:300px;text-align:right;"><span style="transform-origin:100% 0;transform:scaleX(0.9057)">17.730,00</span></div>
<div class="t" style="left:679.5px;top:324.8px;width:300px;text-align:right;"><span style="transform-origin:100% 0;transform:scaleX(0.9057)">16.890,00</span></div>
<div class="t" style="left:784.5px;top:324.8px;width:300px;text-align:right;"><span style="transform-origin:100% 0;transform:scaleX(0.9000)">499.320,00</span></div>
<div style="left:1090px;top:240px;width:9px;height:115px;background:#f0f0f0;border:1px solid #a0a0a0;box-shadow:inset 1px 1px 0 #fff;"></div>
<svg style="left:1092px;top:246px" width="5" height="8"><path d="M0.7 0.7L4 3.8L0.7 7" fill="none" stroke="#000" stroke-width="1.6"/></svg>
<svg style="left:1092px;top:343px" width="5" height="8"><path d="M0.7 0.7L4 3.8L0.7 7" fill="none" stroke="#000" stroke-width="1.6"/></svg>
<div style="left:1094px;top:256px;width:1px;height:83px;background-image:repeating-linear-gradient(to bottom,#3399ff 0,#3399ff 1px,transparent 1px,transparent 3px);"></div>
<div style="left:474px;top:487px;width:403px;height:1px;background:#828790;"></div>
<div style="left:474px;top:488px;width:403px;height:8px;background:#f0f0f0;border:1px solid #a0a0a0;box-shadow:inset 1px 1px 0 #fff;"></div>
<svg style="left:480px;top:490px" width="8" height="5"><path d="M0.7 0.3L3.8 3.5L7 0.3" fill="none" stroke="#000" stroke-width="1.6"/></svg>
<svg style="left:865px;top:490px" width="8" height="5"><path d="M0.7 0.3L3.8 3.5L7 0.3" fill="none" stroke="#000" stroke-width="1.6"/></svg>
<div style="left:490px;top:492px;width:370px;height:1px;background-image:repeating-linear-gradient(to right,#3399ff 0,#3399ff 1px,transparent 1px,transparent 3px);"></div>
<div style="left:1098px;top:129px;width:245px;height:358px;background:#fff;border:1px solid #898c95;"></div>
<div style="left:1100px;top:109px;width:84px;height:21px;background:linear-gradient(#f2f2f2 0,#ebebeb 48%,#dddddd 50%,#cfcfcf 100%);border:1px solid #898c95;box-shadow:inset 0 0 0 1px #fafafa;"></div>
<div style="left:1184px;top:109px;width:49px;height:21px;background:linear-gradient(#f2f2f2 0,#ebebeb 48%,#dddddd 50%,#cfcfcf 100%);border:1px solid #898c95;border-left:none;box-shadow:inset 0 0 0 1px #fafafa;"></div>
<div style="left:1183px;top:110px;width:1px;height:19px;background:#898c95;"></div>
<div class="t" style="left:1106.4px;top:112.8px;"><span style="transform-origin:0 0;transform:scaleX(0.9467)">Field Chooser</span></div>
<div class="t" style="left:1190px;top:112.8px;"><span style="transform-origin:0 0;transform:scaleX(0.9744)">Display</span></div>
<div style="left:1232px;top:107px;width:71px;height:23px;background:#fff;border:1px solid #898c95;border-bottom:none;"></div>
<div class="t" style="left:1240px;top:110.8px;"><span style="transform-origin:0 0;transform:scaleX(1.0000)">New fields</span></div>
<div style="left:1106px;top:142px;width:229px;height:92px;border:1px solid #d5dfe5;border-radius:4px;"></div>
<div style="left:1113px;top:142px;width:28px;height:2px;background:#fff;"></div>
<div class="t" style="left:1114px;top:135.8px;"><span style="transform-origin:0 0;transform:scaleX(0.9615)">Type</span></div>
<svg style="left:1113.5px;top:158.5px" width="13" height="13" viewBox="0 0 13 13"><defs><linearGradient id="rg165" x1="0" y1="0" x2="1" y2="1"><stop offset="0" stop-color="#c4c5c6"/><stop offset="1" stop-color="#fafafa"/></linearGradient><radialGradient id="rb165" cx="0.42" cy="0.38" r="0.62"><stop offset="0" stop-color="#7fdcff"/><stop offset="0.35" stop-color="#2fa4e4"/><stop offset="0.75" stop-color="#14588f"/><stop offset="1" stop-color="#0b2c52"/></radialGradient></defs><circle cx="6.5" cy="6.5" r="5.45" fill="#fdfdfd" stroke="#878888" stroke-width="1"/><circle cx="6.5" cy="6.5" r="3.9" fill="url(#rg165)" stroke="#d3d4d5" stroke-width="0.6"/><circle cx="6.5" cy="6.5" r="3.2" fill="url(#rb165)"/></svg>
<div class="t" style="left:1130px;top:157.8px;"><span style="transform-origin:0 0;transform:scaleX(1.0130)">Function fields</span></div>
<svg style="left:1113.5px;top:184.5px" width="13" height="13" viewBox="0 0 13 13"><defs><linearGradient id="rg191" x1="0" y1="0" x2="1" y2="1"><stop offset="0" stop-color="#c4c5c6"/><stop offset="1" stop-color="#fafafa"/></linearGradient><radialGradient id="rb191" cx="0.42" cy="0.38" r="0.62"><stop offset="0" stop-color="#7fdcff"/><stop offset="0.35" stop-color="#2fa4e4"/><stop offset="0.75" stop-color="#14588f"/><stop offset="1" stop-color="#0b2c52"/></radialGradient></defs><circle cx="6.5" cy="6.5" r="5.45" fill="#fdfdfd" stroke="#878888" stroke-width="1"/><circle cx="6.5" cy="6.5" r="3.9" fill="url(#rg191)" stroke="#d3d4d5" stroke-width="0.6"/></svg>
<div class="t" style="left:1130px;top:183.8px;"><span style="transform-origin:0 0;transform:scaleX(0.9649)">Date fields</span></div>
<svg style="left:1113.5px;top:210.5px" width="13" height="13" viewBox="0 0 13 13"><defs><linearGradient id="rg217" x1="0" y1="0" x2="1" y2="1"><stop offset="0" stop-color="#c4c5c6"/><stop offset="1" stop-color="#fafafa"/></linearGradient><radialGradient id="rb217" cx="0.42" cy="0.38" r="0.62"><stop offset="0" stop-color="#7fdcff"/><stop offset="0.35" stop-color="#2fa4e4"/><stop offset="0.75" stop-color="#14588f"/><stop offset="1" stop-color="#0b2c52"/></radialGradient></defs><circle cx="6.5" cy="6.5" r="5.45" fill="#fdfdfd" stroke="#878888" stroke-width="1"/><circle cx="6.5" cy="6.5" r="3.9" fill="url(#rg217)" stroke="#d3d4d5" stroke-width="0.6"/></svg>
<div class="t" style="left:1130px;top:209.8px;"><span style="transform-origin:0 0;transform:scaleX(0.9773)">Calculated fields</span></div>
<div class="t" style="left:1110px;top:240.8px;"><span style="transform-origin:0 0;transform:scaleX(0.9880)">New field name</span></div>
<div style="left:1110px;top:262px;width:223px;height:23px;background:#fff;border:1px solid #e3e9ef;border-top-color:#abadb3;border-left-color:#e2e3ea;border-radius:1px;"></div>
<div style="left:1239px;top:292px;width:93px;height:23px;background:linear-gradient(#f2f2f2 0,#ebebeb 48%,#dddddd 50%,#cfcfcf 100%);border:1px solid #707070;border-radius:3px;box-shadow:inset 0 0 0 1px #fcfcfc;"></div>
<div class="t" style="left:1268.4px;top:297.2px;"><span style="transform-origin:0 0;transform:scaleX(0.9167)">Create</span></div>
<div style="left:1106px;top:329px;width:229px;height:118px;border:1px solid #d5dfe5;border-radius:4px;"></div>
<div style="left:1113px;top:329px;width:44px;height:2px;background:#fff;"></div>
<div class="t" style="left:1113.6px;top:322.8px;"><span style="transform-origin:0 0;transform:scaleX(0.9767)">Settings</span></div>
<div class="t" style="left:1114px;top:345.1px;"><span style="transform-origin:0 0;transform:scaleX(0.9661)">Field name</span></div>
<div style="left:1177px;top:340px;width:151px;height:23px;background:linear-gradient(#f2f2f2 0,#ebebeb 48%,#dddddd 50%,#cfcfcf 100%);border:1px solid #707070;border-radius:3px;box-shadow:inset 0 0 0 1px #fcfcfc;"></div>
<svg style="left:1316px;top:350px" width="7" height="4"><path d="M0 0h7L3.5 4z" fill="#000"/></svg>
<div class="t" style="left:1182px;top:345.1px;width:127px;overflow:hidden;"><span style="transform-origin:0 0;transform:scaleX(0.9766)">Absolute(Sum in base currency)</span></div>
<div class="t" style="left:1114px;top:371.1px;"><span style="transform-origin:0 0;transform:scaleX(1.0217)">Function</span></div>
<div style="left:1177px;top:366px;width:151px;height:23px;background:linear-gradient(#f2f2f2 0,#ebebeb 48%,#dddddd 50%,#cfcfcf 100%);border:1px solid #707070;border-radius:3px;box-shadow:inset 0 0 0 1px #fcfcfc;"></div>
<svg style="left:1316px;top:376px" width="7" height="4"><path d="M0 0h7L3.5 4z" fill="#000"/></svg>
<div class="t" style="left:1181px;top:371.1px;"><span style="transform-origin:0 0;transform:scaleX(1.0400)">Total</span></div>
<div class="t" style="left:1114px;top:397.1px;"><span style="transform-origin:0 0;transform:scaleX(0.9744)">Display</span></div>
<div style="left:1177px;top:392px;width:151px;height:23px;background:linear-gradient(#f2f2f2 0,#ebebeb 48%,#dddddd 50%,#cfcfcf 100%);border:1px solid #707070;border-radius:3px;box-shadow:inset 0 0 0 1px #fcfcfc;"></div>
<svg style="left:1316px;top:402px" width="7" height="4"><path d="M0 0h7L3.5 4z" fill="#000"/></svg>
<div class="t" style="left:1182px;top:397.1px;"><span style="transform-origin:0 0;transform:scaleX(1.0000)">Absolute</span></div>
<div class="t" style="left:1115px;top:422.2px;color:#a2a2a2;"><span style="transform-origin:0 0;transform:scaleX(0.9697)">Graph</span></div>
<div style="left:1315px;top:423px;width:13px;height:13px;background:#f6f6f6;border:1px solid #c3c3c3;"></div>
<div style="left:5px;top:518px;width:1338px;height:113px;background:#fff;border:1px solid #898c95;"></div>
<div style="left:57px;top:498px;width:59px;height:21px;background:linear-gradient(#f2f2f2 0,#ebebeb 48%,#dddddd 50%,#cfcfcf 100%);border:1px solid #898c95;box-shadow:inset 0 0 0 1px #fafafa;"></div>
<div class="t" style="left:61px;top:501.8px;"><span style="transform-origin:0 0;transform:scaleX(0.9608)">Summary</span></div>
<div style="left:5px;top:496px;width:52px;height:23px;background:#fff;border:1px solid #898c95;border-bottom:none;"></div>
<div class="t" style="left:13px;top:499.8px;"><span style="transform-origin:0 0;transform:scaleX(0.9655)">Chart</span></div>
<div class="t" style="left:17px;top:544.8px;"><span style="transform-origin:0 0;transform:scaleX(0.9684)">Source data chart</span></div>
<div style="left:175px;top:540px;width:154px;height:23px;background:linear-gradient(#f2f2f2 0,#ebebeb 48%,#dddddd 50%,#cfcfcf 100%);border:1px solid #707070;border-radius:3px;box-shadow:inset 0 0 0 1px #fcfcfc;"></div>
<svg style="left:317px;top:550px" width="7" height="4"><path d="M0 0h7L3.5 4z" fill="#000"/></svg>
<div class="t" style="left:179.4px;top:545.1px;"><span style="transform-origin:0 0;transform:scaleX(0.9459)">Selected cells</span></div>
<div style="left:9px;top:566px;width:1332px;height:62px;border:1px solid #828790;background:#fff;overflow:hidden">
<div class="t" style="left:13.6px;top:63px;transform-origin:0 0;transform:rotate(-90deg) scaleX(0.955)"><span>Sum in base currency</span></div>
</div>
<div class="t" style="left:80.4px;top:584.8px;"><span style="transform-origin:0 0;transform:scaleX(0.9130)">0,00</span></div>
<div style="left:108px;top:591px;width:1032px;height:1px;background:#000;"></div>
<div style="left:420px;top:591px;width:412px;height:2px;background:#000;"></div>
<div style="left:108px;top:591px;width:5px;height:2px;background:#000;"></div>
<div style="left:112px;top:592px;width:1px;height:4px;background:#000;"></div>
<div style="left:1139px;top:592px;width:1px;height:4px;background:#000;"></div>
<div class="t" style="left:617px;top:602.8px;"><span style="transform-origin:0 0;transform:scaleX(0.8500)">DIV</span></div>
<div style="left:1230px;top:584px;width:1px;height:14px;background:#000;"></div>
<div style="left:1230px;top:597px;width:16px;height:1px;background:#000;"></div>
<div style="left:1233px;top:587px;width:3px;height:10px;background:#e6c27e;border-left:1px solid #000;border-top:1px solid #000;"></div>
<div style="left:1236px;top:592px;width:3px;height:5px;background:#5c7cd2;border-left:1px solid #000;border-top:1px solid #000;"></div>
<div style="left:1239px;top:590px;width:3px;height:7px;background:#e6c27e;border-left:1px solid #000;border-top:1px solid #000;"></div>
<div style="left:1242px;top:584px;width:3px;height:13px;background:#5c7cd2;border-left:1px solid #000;border-top:1px solid #000;"></div>
<div style="left:1244px;top:584px;width:1px;height:13px;background:#000;"></div>
<div style="left:1238px;top:592px;width:1px;height:5px;background:#222;"></div>
<div style="left:1241px;top:590px;width:1px;height:7px;background:#444;"></div>
<div style="left:1235px;top:587px;width:1px;height:10px;background:#555;"></div>
<div class="t" style="left:1250px;top:584.8px;color:#0000ff;"><span style="transform-origin:0 0;transform:scaleX(1.0211)"><u>Column chart</u></span></div>
<div style="left:1157px;top:611px;width:12px;height:12px;background:#ffc266;border:1px solid #000;"></div>
<div class="t" style="left:1174.5px;top:609.6px;"><span style="transform-origin:0 0;transform:scaleX(0.9641)">2009 - Sum in base currency</span></div>
<div style="left:1px;top:635px;width:1348px;height:1px;background:#fff;"></div>
<div style="left:1px;top:636px;width:1348px;height:1px;background:#a0a0a0;"></div>
<div style="left:1px;top:637px;width:1348px;height:1px;background:#fff;"></div>
<div style="left:2px;top:638px;width:1346px;height:16px;background:#f0eeed;"></div>
<div style="left:1px;top:638px;width:1px;height:17px;background:#fff;"></div>
<div style="left:1px;top:654px;width:1348px;height:1px;background:#fff;"></div>
<div style="left:1348px;top:638px;width:1px;height:16px;background:#fff;"></div>
<div style="left:200px;top:638px;width:1px;height:16px;background:#d8d6d5;"></div>
<div style="left:201px;top:638px;width:1px;height:16px;background:#fff;"></div>
<div style="left:1345px;top:651px;width:2px;height:2px;background:#fbfbfb;"></div>
<div style="left:1345px;top:651px;width:1px;height:1px;background:#c9c7c6;"></div>
<div style="left:1342px;top:651px;width:2px;height:2px;background:#fbfbfb;"></div>
<div style="left:1342px;top:651px;width:1px;height:1px;background:#c9c7c6;"></div>
<div style="left:1339px;top:651px;width:2px;height:2px;background:#fbfbfb;"></div>
<div style="left:1339px;top:651px;width:1px;height:1px;background:#c9c7c6;"></div>
<div style="left:1345px;top:648px;width:2px;height:2px;background:#fbfbfb;"></div>
<div style="left:1345px;top:648px;width:1px;height:1px;background:#c9c7c6;"></div>
<div style="left:1342px;top:648px;width:2px;height:2px;background:#fbfbfb;"></div>
<div style="left:1342px;top:648px;width:1px;height:1px;background:#c9c7c6;"></div>
<div style="left:1345px;top:645px;width:2px;height:2px;background:#fbfbfb;"></div>
<div style="left:1345px;top:645px;width:1px;height:1px;background:#c9c7c6;"></div>
</div></body></html>
